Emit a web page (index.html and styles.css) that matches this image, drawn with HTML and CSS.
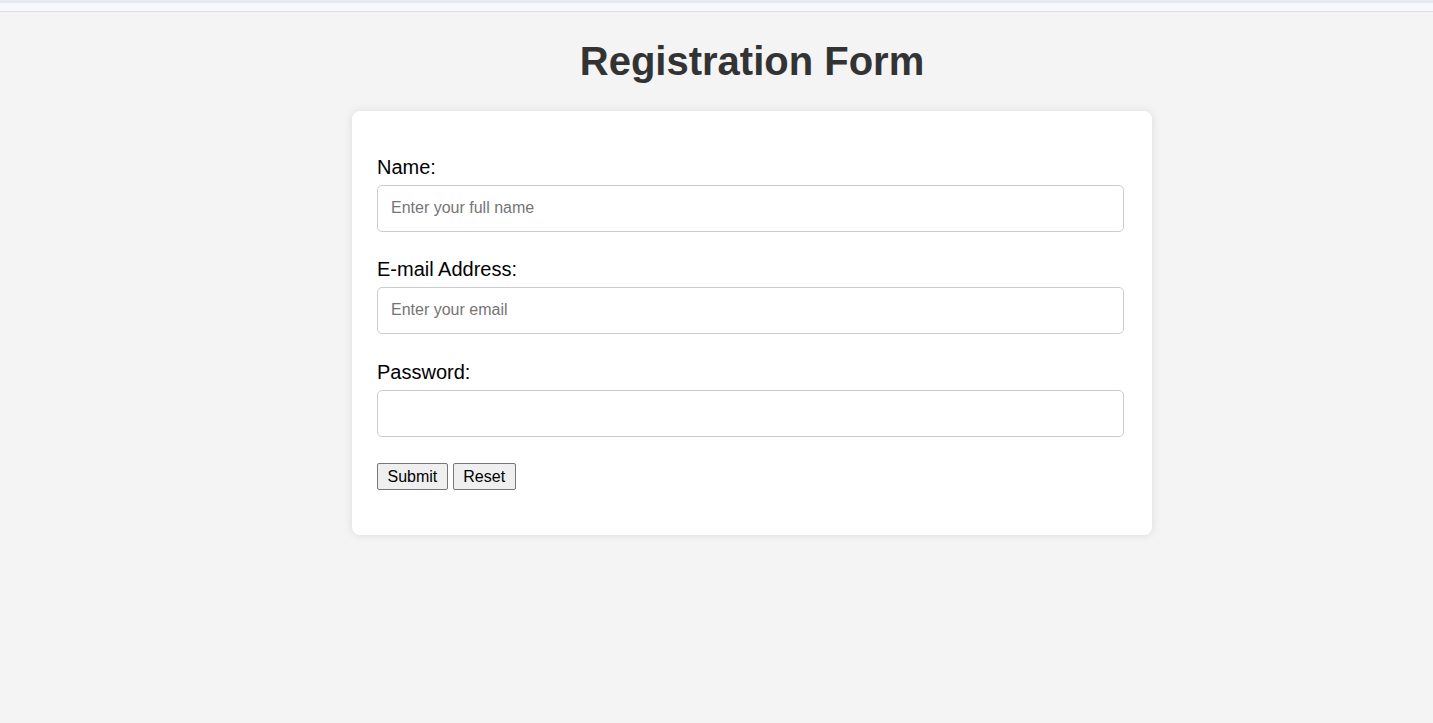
FILE: index.html
```html
<!DOCTYPE html>
<html lang="en">
<head>
<meta charset="utf-8">
<title>Registration Form</title>
<link rel="stylesheet" href="styles.css">
</head>
<body>
<div class="topbar"></div>
<main class="page">
  <h1 class="title">Registration Form</h1>
  <form class="card">
    <div class="field">
      <label class="label" for="name">Name:</label>
      <input class="input" id="name" type="text" placeholder="Enter your full name">
    </div>
    <div class="field">
      <label class="label" for="email">E-mail Address:</label>
      <input class="input" id="email" type="email" placeholder="Enter your email">
    </div>
    <div class="field field-pw">
      <label class="label" for="pw">Password:</label>
      <input class="input" id="pw" type="password">
    </div>
    <div class="actions">
      <button class="btn" type="submit">Submit</button>
      <button class="btn" type="reset">Reset</button>
    </div>
  </form>
</main>
</body>
</html>
```
FILE: styles.css
```css
html, body {
  margin: 0;
  padding: 0;
}
body {
  background: #f4f4f4;
  font-family: "Liberation Sans", Arial, sans-serif;
  min-height: 723px;
}
.topbar {
  height: 8px;
  border-top: 3px solid #e6e8f5;
  background: #f8f8ff;
  border-bottom: 1px solid #dcdce6;
}
.page {
  padding-left: 71px;
  display: flex;
  flex-direction: column;
  align-items: center;
}
.title {
  margin: 26px 0 27px;
  font-size: 40px;
  line-height: 46px;
  font-weight: bold;
  color: #333;
  text-align: center;
}
.card {
  box-sizing: border-box;
  width: 800px;
  padding: 45px 28px 45px 25px;
  background: #fff;
  border-radius: 8px;
  box-shadow: 0 0 10px rgba(0, 0, 0, 0.1);
  display: flex;
  flex-direction: column;
  gap: 26px;
}
.field {
  display: flex;
  flex-direction: column;
  gap: 6px;
}
.field-pw {
  margin-top: 1px;
}
.label {
  font-size: 20px;
  line-height: 23px;
  color: #000;
}
.input {
  box-sizing: border-box;
  width: 747px;
  height: 47px;
  margin: 0;
  padding: 0 13px 1px;
  border: 1px solid #ccc;
  border-radius: 5px;
  font-family: "Liberation Sans", Arial, sans-serif;
  font-size: 16px;
  color: #000;
  background: #fff;
}
.input::placeholder {
  color: #757575;
}
.actions {
  display: flex;
  gap: 5px;
}
.btn {
  box-sizing: border-box;
  height: 27px;
  margin: 0;
  padding: 0 9.5px;
  font-family: "Liberation Sans", Arial, sans-serif;
  font-size: 16px;
  color: #000;
  background: #efefef;
  border: 1px solid #767676;
  border-radius: 2px;
}
```
